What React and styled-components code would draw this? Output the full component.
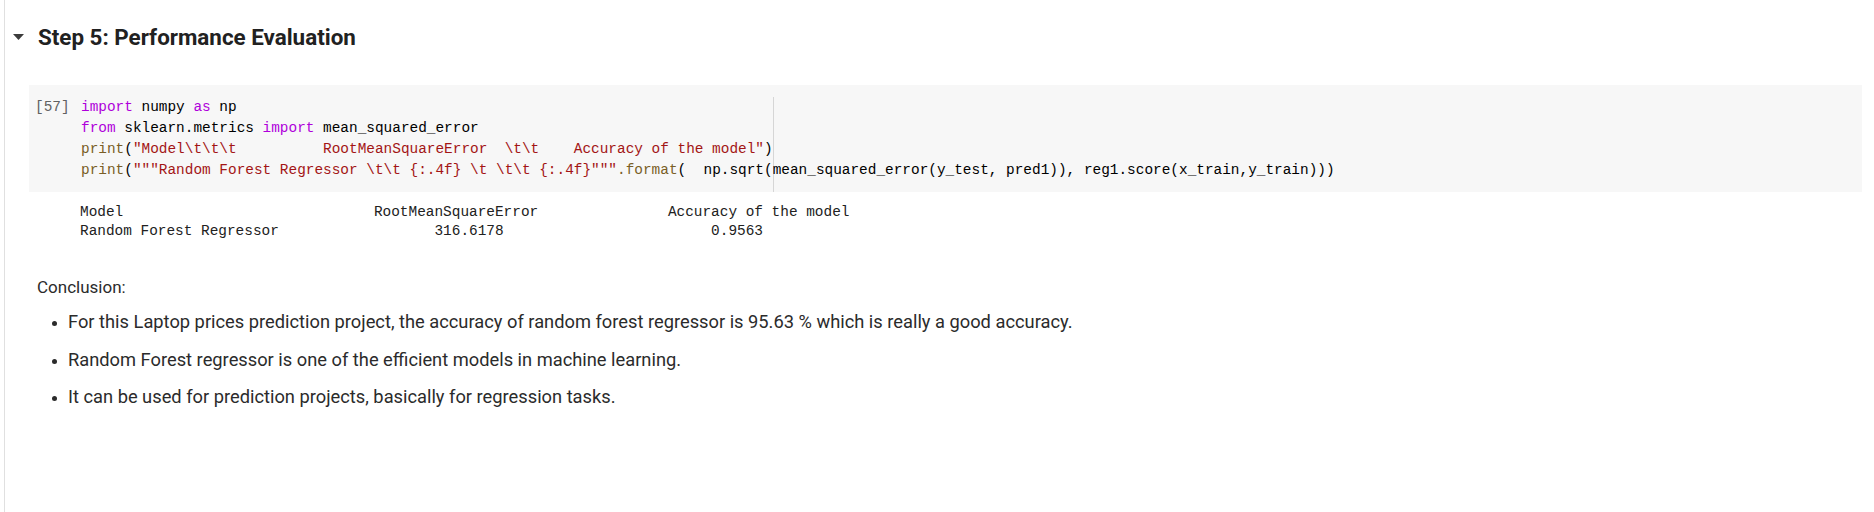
import React from "react";
import styled, { createGlobalStyle } from "styled-components";

const colors = {
    text: "#212121",
    body: "#2b2b2b",
    rule: "#e0e0e0",
    cellBg: "#f7f7f7",
    prompt: "#616161",
    keyword: "#af00db",
    string: "#a31515",
    func: "#795e26",
    ruler: "#d6d6d6",
};

const fonts = {
    ui: "Roboto, 'Noto Sans', Arial, sans-serif",
    mono: "'Liberation Mono', 'DejaVu Sans Mono', monospace",
};

const GlobalStyle = createGlobalStyle`
    html, body {
        margin: 0;
        background: #fff;
    }
`;

const codeLines = [
    [["kw", "import"], ["", " numpy "], ["kw", "as"], ["", " np"]],
    [["kw", "from"], ["", " sklearn.metrics "], ["kw", "import"], ["", " mean_squared_error"]],
    [
        ["fn", "print"],
        ["", "("],
        ["str", "\"Model\\t\\t\\t          RootMeanSquareError  \\t\\t    Accuracy of the model\""],
        ["", ")"],
    ],
    [
        ["fn", "print"],
        ["", "("],
        ["str", "\"\"\"Random Forest Regressor \\t\\t {:.4f} \\t \\t\\t {:.4f}\"\"\""],
        ["fn", ".format"],
        ["", "(  np.sqrt(mean_squared_error(y_test, pred1)), reg1.score(x_train,y_train)))"],
    ],
];

const outputText =
    "Model\t\t\t          RootMeanSquareError  \t\t    Accuracy of the model\n" +
    "Random Forest Regressor \t\t 316.6178 \t \t\t 0.9563";

const bullets = [
    "For this Laptop prices prediction project, the accuracy of random forest regressor is 95.63 % which is really a good accuracy.",
    "Random Forest regressor is one of the efficient models in machine learning.",
    "It can be used for prediction projects, basically for regression tasks.",
];

class Notebook extends React.Component {
    render() {
        return (
            <Page>
                <GlobalStyle />
                <SectionHeader>
                    <CollapseArrow viewBox="0 0 11 6">
                        <path d="M0 0 L11 0 L5.5 6 Z" />
                    </CollapseArrow>
                    <Heading>Step 5: Performance Evaluation</Heading>
                </SectionHeader>

                <CodeCell>
                    <Prompt>[57]</Prompt>
                    <Editor>
                        {codeLines.map((line, i) => (
                            <CodeLine key={i}>
                                {line.map(([kind, text], j) => (
                                    <Token key={j} kind={kind}>{text}</Token>
                                ))}
                            </CodeLine>
                        ))}
                    </Editor>
                </CodeCell>

                <Output>{outputText}</Output>

                <TextCell>
                    <Paragraph>Conclusion:</Paragraph>
                    <BulletList>
                        {bullets.map((b, i) => (
                            <li key={i}>{b}</li>
                        ))}
                    </BulletList>
                </TextCell>
            </Page>
        );
    }
}

const Page = styled.div`
    margin-left: 4px;
    min-height: 512px;
    box-sizing: border-box;
    border-left: 1px solid ${colors.rule};
    font-family: ${fonts.ui};
    color: ${colors.text};
`;

const SectionHeader = styled.div`
    display: flex;
    align-items: center;
    gap: 14px;
    height: 30px;
    padding: 22px 0 0 8px;
`;

const CollapseArrow = styled.svg`
    width: 11px;
    height: 6px;
    fill: #3c3c3c;
    flex: none;
`;

const Heading = styled.h2`
    margin: 0;
    font-size: 22.4px;
    font-weight: 700;
    line-height: 30px;
    color: ${colors.text};
`;

const CodeCell = styled.div`
    display: flex;
    margin: 33px 12px 0 24px;
    height: 107px;
    box-sizing: border-box;
    background: ${colors.cellBg};
`;

const Prompt = styled.div`
    width: 52px;
    flex: none;
    box-sizing: border-box;
    padding: 12px 0 0 6px;
    font-family: ${fonts.mono};
    font-size: 14.42px;
    line-height: 21px;
    color: ${colors.prompt};
`;

const Editor = styled.div`
    flex: 1;
    margin-top: 12px;
    font-family: ${fonts.mono};
    font-size: 14.42px;
    line-height: 21px;
    color: #000;
    background: linear-gradient(${colors.ruler}, ${colors.ruler}) no-repeat;
    background-size: 1px 100%;
    background-position: 80ch 0;
`;

const CodeLine = styled.div`
    white-space: pre;
`;

const tokenColors = {
    kw: colors.keyword,
    str: colors.string,
    fn: colors.func,
};

const Token = styled.span`
    color: ${(p) => tokenColors[p.kind] || "inherit"};
`;

const Output = styled.pre`
    margin: 0 12px 0 24px;
    padding: 11px 0 0 51px;
    font-family: ${fonts.mono};
    font-size: 14.42px;
    line-height: 19px;
    tab-size: 8;
    color: ${colors.text};
`;

const TextCell = styled.div`
    padding: 34px 0 0 32px;
    color: ${colors.body};
    line-height: 24px;
`;

const Paragraph = styled.p`
    margin: 0;
    font-size: 17px;
`;

const BulletList = styled.ul`
    margin: 11px 0 0;
    padding: 0 0 0 31px;
    font-size: 18.3px;
    li {
        margin: 0;
        &::marker {
            font-size: 15px;
        }
        & + li {
            margin-top: 13.5px;
        }
    }
`;

export default function App() {
    return <Notebook />;
}
